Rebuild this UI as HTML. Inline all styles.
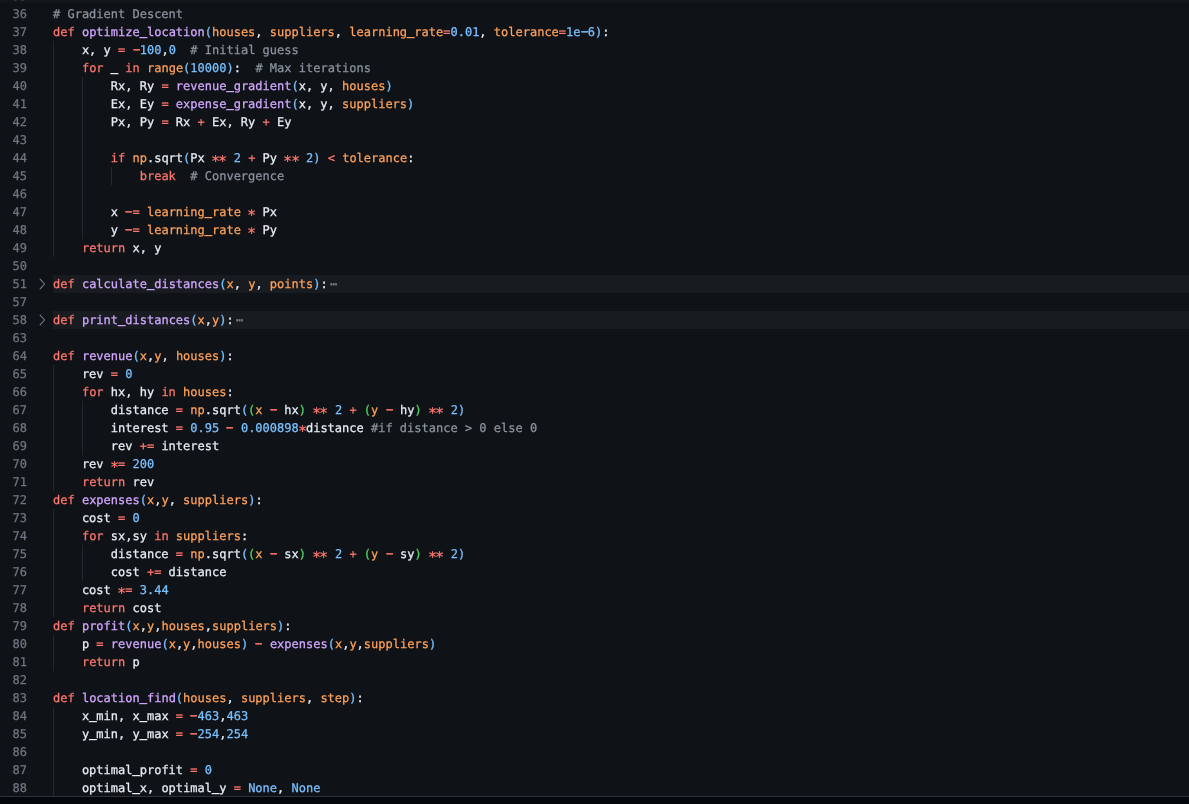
<!DOCTYPE html>
<html lang="en">
<head>
<meta charset="utf-8">
<title>Editor</title>
<style>
html,body{margin:0;padding:0;background:#0f1216;}
body{width:1189px;height:804px;overflow:hidden;position:relative;font-family:"DejaVu Sans Mono","Liberation Mono",monospace;font-size:12px;line-height:18px;color:#e6edf3;-webkit-text-stroke:0.25px;}
#ed{position:absolute;left:0;top:0;width:1189px;height:796px;overflow:hidden;background:#0f1216;}
#code{position:absolute;left:0;top:-13px;width:1189px;will-change:transform;text-rendering:geometricPrecision;}
.l{position:relative;height:18px;white-space:pre;}
.l b{position:absolute;left:0;top:0;width:27px;text-align:right;font-weight:normal;color:#6e7681;}
.l span{position:absolute;left:53px;top:0;right:0;height:18px;}
.l.fd span{background:rgba(110,118,129,0.1);}
.l i{font-style:normal;}
.l em{font-style:normal;display:inline-block;}
.u{transform:translateY(-0.9px);-webkit-text-stroke:0.7px;}
.h{transform:translateY(-0.8px) scaleX(1.9);-webkit-text-stroke:0.4px;}
.a{transform:translateY(3px) scale(1.2);}
.l u{text-decoration:none;color:#808080;margin:0 2.4px;}
.ch{position:absolute;left:34px;top:0;color:#7d8590;}
.k{color:#ff776f}.f{color:#d2a8ff}.p{color:#ffa258}.n{color:#79c0ff}.c{color:#8b949e}.b1{color:#79c0ff}.b2{color:#56d364}
#g s{position:absolute;width:1px;background:#24282e;text-decoration:none;}
#sh{position:absolute;left:0;top:0;width:1189px;height:6px;box-shadow:rgba(72,79,88,0.2) 0 6px 6px -6px inset;}
#bot{position:absolute;left:0;top:796px;width:1189px;height:8px;background:#03060a;border-top:1px solid #2e333a;box-sizing:border-box;}
</style>
</head>
<body>
<div id="ed">
<div id="g">
<s style="left:53.00px;top:41px;height:216px"></s>
<s style="left:53.00px;top:365px;height:126px"></s>
<s style="left:53.00px;top:509px;height:108px"></s>
<s style="left:53.00px;top:635px;height:36px"></s>
<s style="left:53.00px;top:707px;height:90px"></s>
<s style="left:81.90px;top:77px;height:162px"></s>
<s style="left:81.90px;top:401px;height:54px"></s>
<s style="left:81.90px;top:545px;height:36px"></s>
<s style="left:110.79px;top:167px;height:18px"></s>
</div>
<div id="code">
<div class="l"><b>35</b><span></span></div>
<div class="l"><b>36</b><span><i class="c"># Gradient Descent</i></span></div>
<div class="l"><b>37</b><span><i class="k">def</i> <i class="f">optimize<em class="u">_</em>location</i><i class="b1">(</i><i class="p">houses</i>, <i class="p">suppliers</i>, <i class="p">learning<em class="u">_</em>rate</i><i class="k">=</i><i class="n">0.01</i>, <i class="p">tolerance</i><i class="k">=</i><i class="n">1e<em class="h">-</em>6</i><i class="b1">)</i>:</span></div>
<div class="l"><b>38</b><span>    x, y <i class="k">=</i> <i class="k"><em class="h">-</em></i><i class="n">100</i>,<i class="n">0</i>  <i class="c"># Initial guess</i></span></div>
<div class="l"><b>39</b><span>    <i class="k">for</i> <em class="u">_</em> <i class="k">in</i> <i class="p">range</i><i class="b1">(</i><i class="n">10000</i><i class="b1">)</i>:  <i class="c"># Max iterations</i></span></div>
<div class="l"><b>40</b><span>        Rx, Ry <i class="k">=</i> <i class="f">revenue<em class="u">_</em>gradient</i><i class="b1">(</i>x, y, <i class="p">houses</i><i class="b1">)</i></span></div>
<div class="l"><b>41</b><span>        Ex, Ey <i class="k">=</i> <i class="f">expense<em class="u">_</em>gradient</i><i class="b1">(</i>x, y, <i class="p">suppliers</i><i class="b1">)</i></span></div>
<div class="l"><b>42</b><span>        Px, Py <i class="k">=</i> Rx <i class="k">+</i> Ex, Ry <i class="k">+</i> Ey</span></div>
<div class="l"><b>43</b><span></span></div>
<div class="l"><b>44</b><span>        <i class="k">if</i> <i class="p">np</i>.sqrt<i class="b1">(</i>Px <i class="k"><em class="a">*</em><em class="a">*</em></i> <i class="n">2</i> <i class="k">+</i> Py <i class="k"><em class="a">*</em><em class="a">*</em></i> <i class="n">2</i><i class="b1">)</i> <i class="k">&lt;</i> <i class="p">tolerance</i>:</span></div>
<div class="l"><b>45</b><span>            <i class="k">break</i>  <i class="c"># Convergence</i></span></div>
<div class="l"><b>46</b><span></span></div>
<div class="l"><b>47</b><span>        x <i class="k"><em class="h">-</em>=</i> <i class="p">learning<em class="u">_</em>rate</i> <i class="k"><em class="a">*</em></i> Px</span></div>
<div class="l"><b>48</b><span>        y <i class="k"><em class="h">-</em>=</i> <i class="p">learning<em class="u">_</em>rate</i> <i class="k"><em class="a">*</em></i> Py</span></div>
<div class="l"><b>49</b><span>    <i class="k">return</i> x, y</span></div>
<div class="l"><b>50</b><span></span></div>
<div class="l fd"><b>51</b><svg class="ch" viewBox="0 0 20 18" width="20" height="18"><path d="M6.1 4.2 L10.6 9 L6.1 13.8" fill="none" stroke="currentColor" stroke-width="1.05" stroke-linecap="round" stroke-linejoin="round"/></svg><span><i class="k">def</i> <i class="f">calculate<em class="u">_</em>distances</i><i class="b1">(</i><i class="p">x</i>, <i class="p">y</i>, <i class="p">points</i><i class="b1">)</i>:<u class="e">⋯</u></span></div>
<div class="l"><b>57</b><span></span></div>
<div class="l fd"><b>58</b><svg class="ch" viewBox="0 0 20 18" width="20" height="18"><path d="M6.1 4.2 L10.6 9 L6.1 13.8" fill="none" stroke="currentColor" stroke-width="1.05" stroke-linecap="round" stroke-linejoin="round"/></svg><span><i class="k">def</i> <i class="f">print<em class="u">_</em>distances</i><i class="b1">(</i><i class="p">x</i>,<i class="p">y</i><i class="b1">)</i>:<u class="e">⋯</u></span></div>
<div class="l"><b>63</b><span></span></div>
<div class="l"><b>64</b><span><i class="k">def</i> <i class="f">revenue</i><i class="b1">(</i><i class="p">x</i>,<i class="p">y</i>, <i class="p">houses</i><i class="b1">)</i>:</span></div>
<div class="l"><b>65</b><span>    rev <i class="k">=</i> <i class="n">0</i></span></div>
<div class="l"><b>66</b><span>    <i class="k">for</i> hx, hy <i class="k">in</i> <i class="p">houses</i>:</span></div>
<div class="l"><b>67</b><span>        distance <i class="k">=</i> <i class="p">np</i>.sqrt<i class="b1">(</i><i class="b2">(</i><i class="p">x</i> <i class="k"><em class="h">-</em></i> hx<i class="b2">)</i> <i class="k"><em class="a">*</em><em class="a">*</em></i> <i class="n">2</i> <i class="k">+</i> <i class="b2">(</i><i class="p">y</i> <i class="k"><em class="h">-</em></i> hy<i class="b2">)</i> <i class="k"><em class="a">*</em><em class="a">*</em></i> <i class="n">2</i><i class="b1">)</i></span></div>
<div class="l"><b>68</b><span>        interest <i class="k">=</i> <i class="n">0.95</i> <i class="k"><em class="h">-</em></i> <i class="n">0.000898</i><i class="k"><em class="a">*</em></i>distance <i class="c">#if distance &gt; 0 else 0</i></span></div>
<div class="l"><b>69</b><span>        rev <i class="k">+=</i> interest</span></div>
<div class="l"><b>70</b><span>    rev <i class="k"><em class="a">*</em>=</i> <i class="n">200</i></span></div>
<div class="l"><b>71</b><span>    <i class="k">return</i> rev</span></div>
<div class="l"><b>72</b><span><i class="k">def</i> <i class="f">expenses</i><i class="b1">(</i><i class="p">x</i>,<i class="p">y</i>, <i class="p">suppliers</i><i class="b1">)</i>:</span></div>
<div class="l"><b>73</b><span>    cost <i class="k">=</i> <i class="n">0</i></span></div>
<div class="l"><b>74</b><span>    <i class="k">for</i> sx,sy <i class="k">in</i> <i class="p">suppliers</i>:</span></div>
<div class="l"><b>75</b><span>        distance <i class="k">=</i> <i class="p">np</i>.sqrt<i class="b1">(</i><i class="b2">(</i><i class="p">x</i> <i class="k"><em class="h">-</em></i> sx<i class="b2">)</i> <i class="k"><em class="a">*</em><em class="a">*</em></i> <i class="n">2</i> <i class="k">+</i> <i class="b2">(</i><i class="p">y</i> <i class="k"><em class="h">-</em></i> sy<i class="b2">)</i> <i class="k"><em class="a">*</em><em class="a">*</em></i> <i class="n">2</i><i class="b1">)</i></span></div>
<div class="l"><b>76</b><span>        cost <i class="k">+=</i> distance</span></div>
<div class="l"><b>77</b><span>    cost <i class="k"><em class="a">*</em>=</i> <i class="n">3.44</i></span></div>
<div class="l"><b>78</b><span>    <i class="k">return</i> cost</span></div>
<div class="l"><b>79</b><span><i class="k">def</i> <i class="f">profit</i><i class="b1">(</i><i class="p">x</i>,<i class="p">y</i>,<i class="p">houses</i>,<i class="p">suppliers</i><i class="b1">)</i>:</span></div>
<div class="l"><b>80</b><span>    p <i class="k">=</i> <i class="f">revenue</i><i class="b1">(</i><i class="p">x</i>,<i class="p">y</i>,<i class="p">houses</i><i class="b1">)</i> <i class="k"><em class="h">-</em></i> <i class="f">expenses</i><i class="b1">(</i><i class="p">x</i>,<i class="p">y</i>,<i class="p">suppliers</i><i class="b1">)</i></span></div>
<div class="l"><b>81</b><span>    <i class="k">return</i> p</span></div>
<div class="l"><b>82</b><span></span></div>
<div class="l"><b>83</b><span><i class="k">def</i> <i class="f">location<em class="u">_</em>find</i><i class="b1">(</i><i class="p">houses</i>, <i class="p">suppliers</i>, <i class="p">step</i><i class="b1">)</i>:</span></div>
<div class="l"><b>84</b><span>    x<em class="u">_</em>min, x<em class="u">_</em>max <i class="k">=</i> <i class="k"><em class="h">-</em></i><i class="n">463</i>,<i class="n">463</i></span></div>
<div class="l"><b>85</b><span>    y<em class="u">_</em>min, y<em class="u">_</em>max <i class="k">=</i> <i class="k"><em class="h">-</em></i><i class="n">254</i>,<i class="n">254</i></span></div>
<div class="l"><b>86</b><span></span></div>
<div class="l"><b>87</b><span>    optimal<em class="u">_</em>profit <i class="k">=</i> <i class="n">0</i></span></div>
<div class="l"><b>88</b><span>    optimal<em class="u">_</em>x, optimal<em class="u">_</em>y <i class="k">=</i> <i class="n">None</i>, <i class="n">None</i></span></div>
</div>
<div id="sh"></div>
</div>
<div id="bot"></div>
</body>
</html>
